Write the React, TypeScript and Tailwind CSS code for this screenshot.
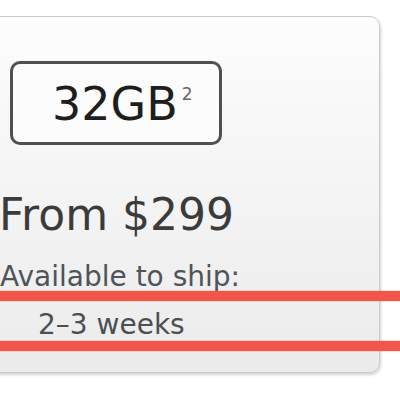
import React from "react";

export default function App() {
  return (
    <div className="relative w-[400px] h-[400px] overflow-hidden bg-white font-['DejaVu_Sans',sans-serif]">
      {/* product card, partly cut off on the left */}
      <div className="ml-[-20px] mt-[16px] w-[400px] h-[357px] rounded-[10px] border border-[#cbcbcb] bg-gradient-to-b from-[#fdfdfd] to-[#ebebeb] shadow-[1px_2px_3px_rgba(0,0,0,0.18)] pt-[44px]">
        <div className="ml-[29px] w-[212px] h-[84px] rounded-[10px] border-[3px] border-[#505050] bg-[#fcfcfc] pl-[39px] pt-[17px]">
          <div className="flex items-start">
            <span className="text-[46px] leading-none text-[#1e1e1e]">32GB</span>
            <span className="ml-[4px] mt-[5px] text-[17px] leading-none text-[#666]">2</span>
          </div>
        </div>

        <p className="ml-[18px] mt-[48px] text-[44px] leading-none text-[#3b3b3b]">
          From $299
        </p>
        <p className="ml-[19px] mt-[26px] text-[28px] leading-none text-[#4f5458]">
          Available to ship:
        </p>
        <p className="ml-[57px] mt-[20px] text-[28px] leading-none text-[#4c4f52]">
          2–3 weeks
        </p>
      </div>

      {/* red highlight lines drawn over the card */}
      <div className="absolute left-0 top-[291px] w-[400px] h-[10px] bg-[#f0574a] shadow-[0_0_1px_#f0574a]" />
      <div className="absolute left-0 top-[341px] w-[400px] h-[10px] bg-[#f0574a] shadow-[0_0_1px_#f0574a]" />
    </div>
  );
}
